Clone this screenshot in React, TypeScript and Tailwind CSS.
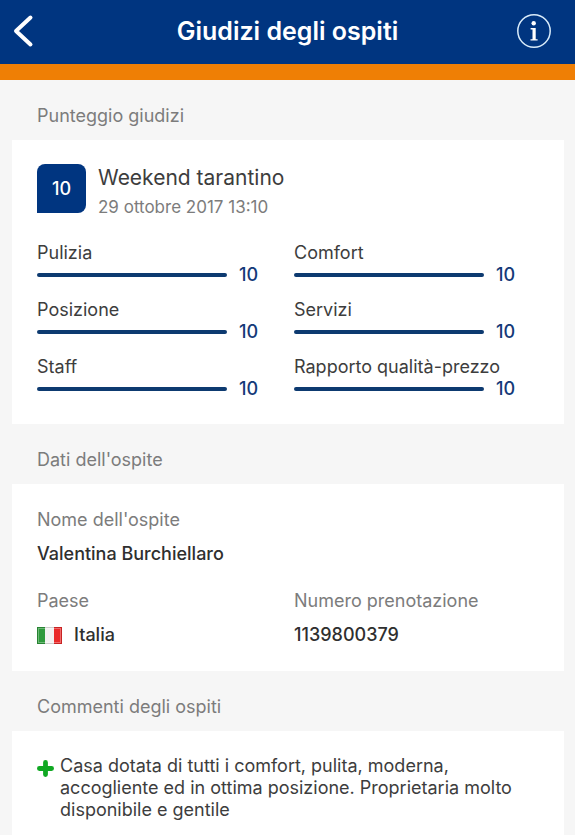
import type { ReactNode } from 'react';

interface Score {
  label: string;
  value: number;
}

const scores: Score[] = [
  { label: 'Pulizia', value: 10 },
  { label: 'Comfort', value: 10 },
  { label: 'Posizione', value: 10 },
  { label: 'Servizi', value: 10 },
  { label: 'Staff', value: 10 },
  { label: 'Rapporto qualità-prezzo', value: 10 },
];

function Section({ title, children }: { title: string; children: ReactNode }) {
  return (
    <section>
      <h2 className="pt-6 pb-3 pl-[37px] text-lg leading-6 text-[#7c7c7c]">{title}</h2>
      <div className="ml-3 mr-[11px] bg-white px-[25px]">{children}</div>
    </section>
  );
}

function ScoreRow({ label, value }: Score) {
  return (
    <div>
      <p className="whitespace-nowrap">{label}</p>
      <div className="flex items-center gap-3">
        <div className="h-1 flex-1">
          <div className="h-1 rounded-xs bg-[#0d3a70]" style={{ width: `${value * 10}%` }}></div>
        </div>
        <span className="w-[43px] font-medium text-[#143a78]">{value}</span>
      </div>
    </div>
  );
}

function Field({ label, children }: { label: string; children: ReactNode }) {
  return (
    <div className="space-y-3">
      <dt className="text-[#7c7c7c]">{label}</dt>
      <dd className="flex items-center gap-3 font-medium text-[#2f2f2f]">{children}</dd>
    </div>
  );
}

function ItalyFlag() {
  return (
    <svg width="25" height="17" viewBox="0 0 25 17" aria-hidden="true">
      <rect width="8" height="17" fill="#2f9a3c" />
      <rect x="8" width="9" height="17" fill="#f3f1f1" />
      <rect x="17" width="8" height="17" fill="#ea2a2a" />
      <rect x="1.5" y="1.5" width="22" height="14" fill="none" stroke="#fff" strokeOpacity="0.3" />
      <rect x="0.5" y="0.5" width="24" height="16" fill="none" stroke="#000" strokeOpacity="0.15" />
    </svg>
  );
}

export default function App() {
  return (
    <div className="min-h-screen bg-[#f6f6f6] font-['Inter',sans-serif] text-lg leading-[22px] text-[#3d3d3d]">
      <header className="flex h-20 items-center justify-between border-b-16 border-[#ef7f05] bg-[#003580] px-3 pb-0.5 text-white">
        <button type="button" aria-label="Indietro" className="flex w-[47px] items-center">
          <svg width="22" height="36" viewBox="0 0 22 36" fill="none" aria-hidden="true">
            <path d="M18.5 4.5L4 18L18.5 31.5" stroke="currentColor" strokeWidth="4" strokeLinecap="round" strokeLinejoin="round" />
          </svg>
        </button>
        <h1 className="text-[25px] leading-8 font-semibold">Giudizi degli ospiti</h1>
        <button type="button" aria-label="Informazioni" className="flex w-[47px] items-center">
          <svg width="36" height="36" viewBox="0 0 36 36" fill="none" aria-hidden="true">
            <circle cx="18" cy="18" r="16.2" stroke="#d9ecfa" strokeWidth="1.5" />
            <circle cx="17.7" cy="10.2" r="2.2" fill="#fff" />
            <path d="M14.6 15H19.7V26.2H21.6V27.6H14.5V26.2H16.5V16.4H14.6Z" fill="#fff" />
          </svg>
        </button>
      </header>

      <main>
        <Section title="Punteggio giudizi">
          <div className="py-6">
            <div className="mb-6 flex gap-3">
              <div className="flex size-[49px] items-center justify-center rounded-lg rounded-bl-none bg-[#003580] font-medium text-white">
                10
              </div>
              <div>
                <h3 className="text-[21px] leading-7">Weekend tarantino</h3>
                <p className="pt-1 text-[17px] text-[#7c7c7c]">29 ottobre 2017 13:10</p>
              </div>
            </div>
            <div className="grid grid-cols-2 gap-x-3 gap-y-[13px]">
              {scores.map((score) => (
                <ScoreRow key={score.label} {...score} />
              ))}
            </div>
          </div>
        </Section>

        <Section title="Dati dell'ospite">
          <dl className="grid grid-cols-2 gap-x-3 gap-y-[25px] py-[25px]">
            <div className="col-span-2">
              <Field label="Nome dell'ospite">Valentina Burchiellaro</Field>
            </div>
            <Field label="Paese">
              <ItalyFlag />
              Italia
            </Field>
            <Field label="Numero prenotazione">1139800379</Field>
          </dl>
        </Section>

        <Section title="Commenti degli ospiti">
          <div className="flex gap-[6px] py-6">
            <svg width="17" height="24" viewBox="0 0 17 24" className="shrink-0" aria-label="Positivo">
              <path d="M8.5 7.4V19.6M2.4 13.5H14.6" stroke="#10a822" strokeWidth="4.8" strokeLinecap="round" />
            </svg>
            <p>
              Casa dotata di tutti i comfort, pulita, moderna, accogliente ed in ottima posizione. Proprietaria molto
              disponibile e gentile
            </p>
          </div>
        </Section>
      </main>
    </div>
  );
}
